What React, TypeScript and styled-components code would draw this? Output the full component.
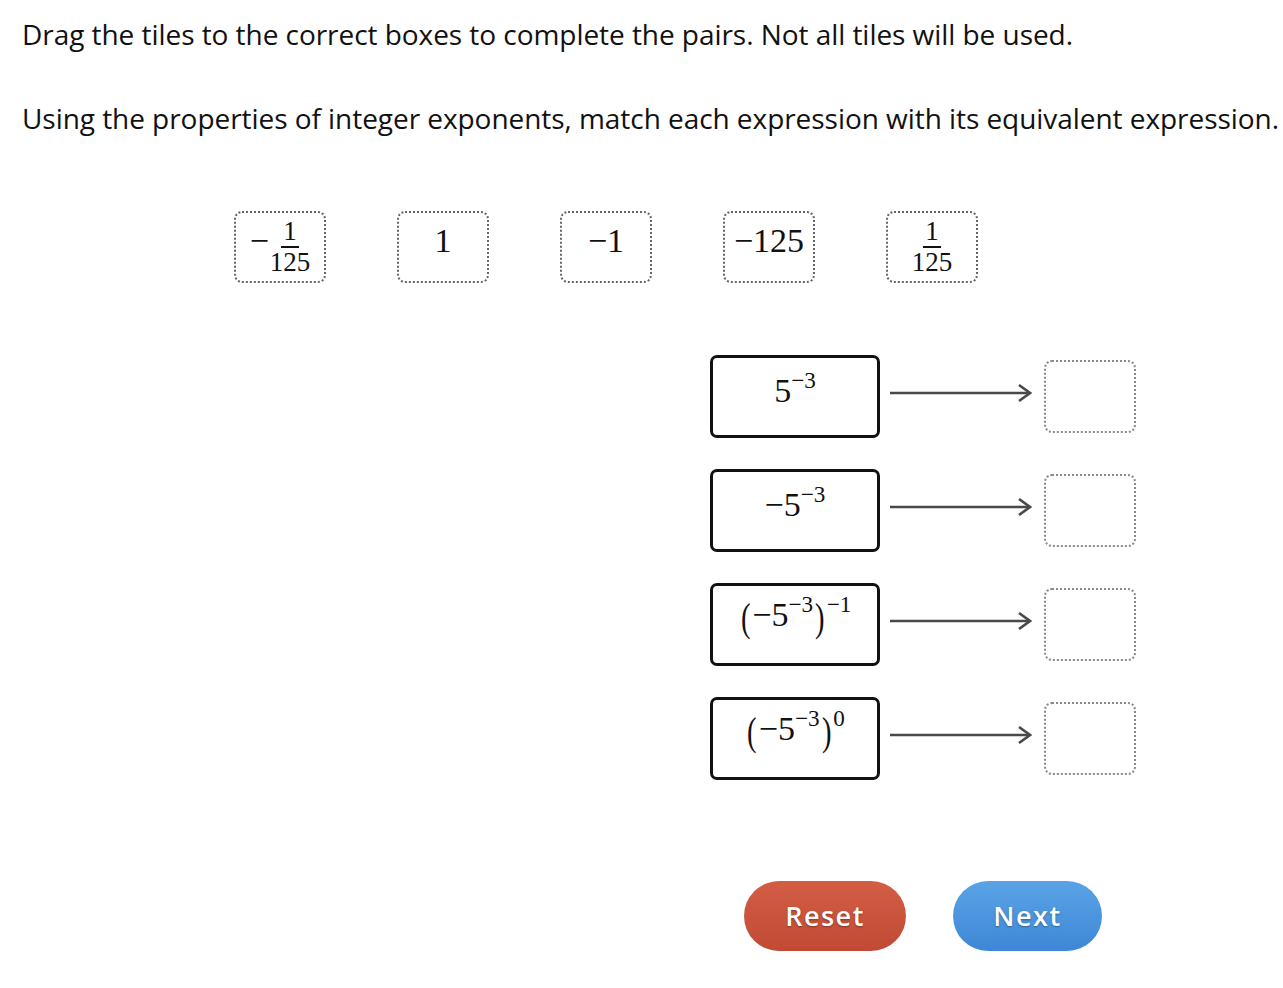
import React from 'react'
import styled, { createGlobalStyle } from 'styled-components'

const GlobalStyle = createGlobalStyle`
  body {
    margin: 0;
    background: #fff;
    font-family: "Open Sans", "Liberation Sans", sans-serif;
    color: #111;
  }
`

const Page = styled.div`
  width: 1283px;
  height: 988px;
  padding: 15px 0 0 22px;
  box-sizing: border-box;
  overflow: hidden;
`

const Prompt = styled.p`
  margin: 0;
  font-size: 28px;
  line-height: 38px;
  white-space: nowrap;
  letter-spacing: -0.05px;
`

const Instruction = styled(Prompt)`
  margin-top: 46px;
`

const TileRow = styled.div`
  display: flex;
  gap: 71px;
  margin: 74px 0 0 212px;
`

const Tile = styled.div`
  width: 92px;
  height: 72px;
  box-sizing: border-box;
  border: 2px dotted #666;
  border-radius: 8px;
  display: flex;
  align-items: center;
  justify-content: center;
  padding-bottom: 12px;
`

const Math = styled.span<{ $size?: number }>`
  font-family: "Liberation Serif", "DejaVu Serif", serif;
  font-size: ${p => p.$size ?? 34}px;
  line-height: 1;
  color: #111;
  display: inline-block;
  white-space: nowrap;
`

const Frac = styled.span`
  display: inline-flex;
  flex-direction: column;
  align-items: center;
  vertical-align: middle;
  font-size: 27px;
  line-height: 1;
  margin-top: 12px;
`

const Num = styled.span`
  padding: 0 2px 1px;
  border-bottom: 2px solid #111;
`

const Den = styled.span`
  padding-top: 1px;
`

const Lead = styled.span`
  vertical-align: middle;
  margin-right: 1px;
`

const Sup = styled.sup`
  font-size: 0.68em;
  vertical-align: 0.6em;
  line-height: 0;
`

const Paren = styled.span`
  font-size: 1.2em;
  display: inline-block;
  vertical-align: -0.12em;
  transform: scaleX(0.7);
`

const Pairs = styled.div`
  display: flex;
  flex-direction: column;
  gap: 31px;
  margin: 72px 0 0 688px;
`

const PairRow = styled.div`
  display: flex;
  align-items: center;
`

const Expression = styled.div`
  width: 170px;
  height: 83px;
  box-sizing: border-box;
  border: 3.5px solid #111;
  border-radius: 7px;
  display: flex;
  align-items: center;
  justify-content: center;
  padding-bottom: 12px;
`

const Arrow = styled.svg`
  margin: 0 12px 8px 10px;
  flex: none;
`

const DropBox = styled.div`
  width: 92px;
  height: 73px;
  box-sizing: border-box;
  border: 2px dotted #8a8a8a;
  border-radius: 8px;
`

const Buttons = styled.div`
  display: flex;
  gap: 47px;
  margin: 101px 0 0 722px;
`

const Button = styled.button<{ $tone: 'red' | 'blue'; $w: number }>`
  width: ${p => p.$w}px;
  height: 70px;
  border: none;
  border-radius: 35px;
  font-family: "Open Sans", "Liberation Sans", sans-serif;
  font-weight: 600;
  font-size: 27px;
  letter-spacing: 1.5px;
  color: #fff;
  text-shadow: 0 1px 2px rgba(0, 0, 0, 0.35);
  background: ${p =>
    p.$tone === 'red'
      ? 'linear-gradient(#d35d45, #c04a34)'
      : 'linear-gradient(#5ba3e6, #3e87d6)'};
  padding: 0 0 2px;
  cursor: pointer;
`

const ArrowIcon = () => (
  <Arrow width="142" height="20" viewBox="0 0 142 20">
    <line x1="0" y1="10" x2="139" y2="10" stroke="#4a4a4a" strokeWidth="2.3" />
    <polyline points="129,2 140,10 129,18" fill="none" stroke="#4a4a4a" strokeWidth="2.7" />
  </Arrow>
)

const M = '\u2212'

const tiles = [
  <Math><Lead>{M}</Lead><Frac><Num>1</Num><Den>125</Den></Frac></Math>,
  <Math>1</Math>,
  <Math>{M}1</Math>,
  <Math>{M}125</Math>,
  <Math><Frac><Num>1</Num><Den>125</Den></Frac></Math>,
]

const expressions = [
  <Math $size={34}>5<Sup>{M}3</Sup></Math>,
  <Math $size={34}>{M}5<Sup>{M}3</Sup></Math>,
  <Math $size={34}><Paren>(</Paren>{M}5<Sup>{M}3</Sup><Paren>)</Paren><Sup>{M}1</Sup></Math>,
  <Math $size={34}><Paren>(</Paren>{M}5<Sup>{M}3</Sup><Paren>)</Paren><Sup>0</Sup></Math>,
]

export default function App() {
  return (
    <Page>
      <GlobalStyle />
      <Prompt>Drag the tiles to the correct boxes to complete the pairs. Not all tiles will be used.</Prompt>
      <Instruction>Using the properties of integer exponents, match each expression with its equivalent expression.</Instruction>
      <TileRow>
        {tiles.map((t, i) => (
          <Tile key={i}>{t}</Tile>
        ))}
      </TileRow>
      <Pairs>
        {expressions.map((e, i) => (
          <PairRow key={i}>
            <Expression>{e}</Expression>
            <ArrowIcon />
            <DropBox />
          </PairRow>
        ))}
      </Pairs>
      <Buttons>
        <Button $tone="red" $w={162}>Reset</Button>
        <Button $tone="blue" $w={149}>Next</Button>
      </Buttons>
    </Page>
  )
}
